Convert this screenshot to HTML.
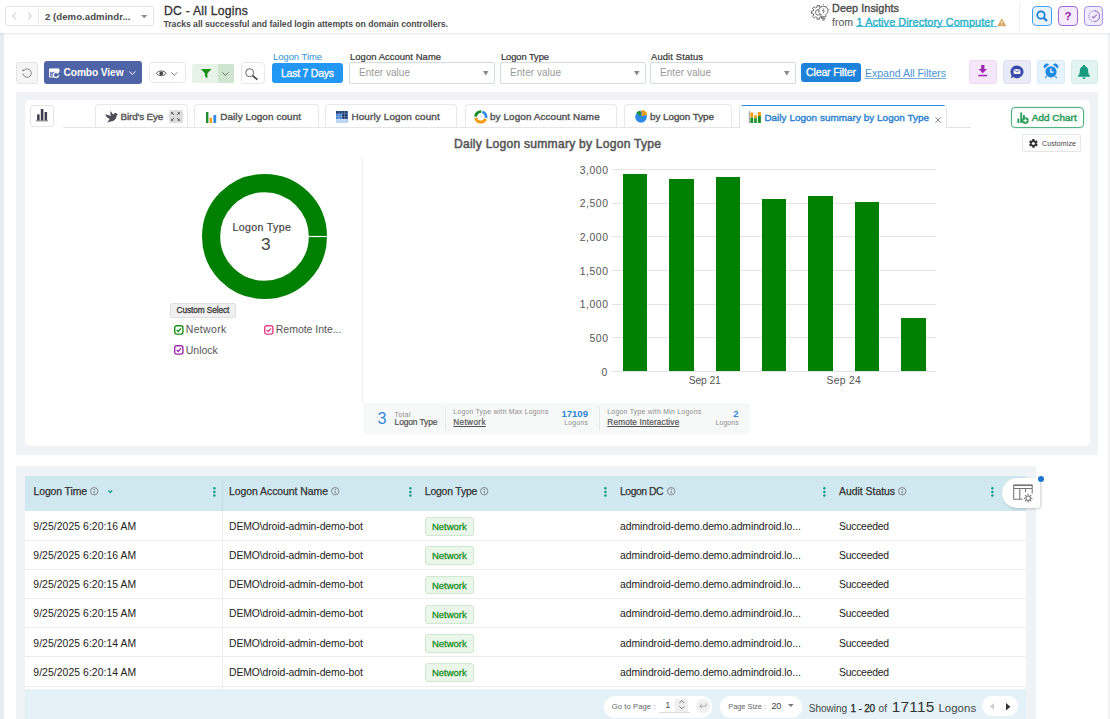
<!DOCTYPE html>
<html lang="en"><head><meta charset="utf-8"><title>DC - All Logins</title>
<style>
html,body{margin:0;padding:0;}
body{width:1110px;height:719px;position:relative;overflow:hidden;background:#fff;font-family:"Liberation Sans",sans-serif;color:#333;}
.t{position:absolute;white-space:nowrap;}
.b{position:absolute;box-sizing:border-box;}
svg{position:absolute;overflow:visible;}
</style></head><body>
<div class="b" style="left:0px;top:33px;width:4px;height:686px;background:#e6edf1;"></div>
<div class="b" style="left:1108px;top:33px;width:2px;height:686px;background:#f1f3f5;"></div>
<div class="b" style="left:0px;top:0px;width:1110px;height:33px;background:#fff;box-shadow:0 1px 2.5px rgba(0,0,0,.10);"></div>
<div class="b" style="left:5.3px;top:6px;width:149px;height:20px;border:1px solid #e6e6e6;border-radius:3px;background:#fff;"></div>
<div class="b" style="left:37.5px;top:6px;width:1px;height:20px;background:#e9e9e9;"></div>
<svg style="left:12px;top:12px;" width="5" height="8" viewBox="0 0 5 8"><path d="M4 0.5 L0.8 4 L4 7.5" fill="none" stroke="#bdbdbd" stroke-width="1"/></svg>
<svg style="left:26.5px;top:12px;" width="5" height="8" viewBox="0 0 5 8"><path d="M1 0.5 L4.2 4 L1 7.5" fill="none" stroke="#bdbdbd" stroke-width="1"/></svg>
<span class="t" style="left:45px;top:10.00px;font-size:9.6px;line-height:13px;color:#4a4a4a;font-weight:700;letter-spacing:0.043px;">2 (demo.admindr...</span>
<svg style="left:140.6px;top:14.7px;" width="6.4" height="3.2" viewBox="0 0 6.4 3.2"><path d="M0 0 H6.4 L3.2 3.2 Z" fill="#8a8a8a"/></svg>
<span class="t" style="left:164px;top:2.70px;font-size:12.2px;line-height:17px;color:#333;letter-spacing:0.228px;-webkit-text-stroke:0.3px #333;">DC - All Logins</span>
<span class="t" style="left:163.5px;top:17.80px;font-size:8.7px;line-height:12px;color:#4c4c4c;font-weight:700;letter-spacing:-0.047px;">Tracks all successful and failed login attempts on domain controllers.</span>
<span class="t" style="left:832px;top:1.30px;font-size:10.8px;line-height:15px;color:#4a4a4a;letter-spacing:0.081px;-webkit-text-stroke:0.35px #4a4a4a;">Deep Insights</span>
<span class="t" style="left:832px;top:14.80px;font-size:10.5px;line-height:15px;color:#555;">from</span>
<span class="t" style="left:856.5px;top:14.80px;font-size:10.8px;line-height:15px;color:#25b0c6;letter-spacing:0.118px;-webkit-text-stroke:0.35px #25b0c6;">1 Active Directory Computer</span>
<div class="b" style="left:856px;top:26.2px;width:140.5px;height:1.3px;background:#4cc3d6;"></div>
<div class="b" style="left:1019.3px;top:3px;width:1px;height:28px;background:#efefef;"></div>
<div class="b" style="left:1032px;top:6px;width:19.8px;height:19.6px;border:1px solid #42a0f0;border-radius:4px;background:#e8f3fc;"></div>
<div class="b" style="left:1058px;top:6px;width:19.6px;height:19.6px;border:1px solid #a066dc;border-radius:4px;background:#f5ebfc;"></div>
<div class="b" style="left:1084px;top:6px;width:19.4px;height:19.6px;border:1px solid #a892e4;border-radius:4px;background:#f1ecfb;"></div>
<div class="b" style="left:16px;top:62px;width:22px;height:22px;border:1px solid #e4e4e4;border-radius:3px;background:#f5f5f5;"></div>
<div class="b" style="left:44px;top:61px;width:98px;height:23px;border-radius:3px;background:#4e64a6;"></div>
<span class="t" style="left:63.5px;top:65.50px;font-size:10.2px;line-height:14px;color:#fff;font-weight:700;letter-spacing:-0.095px;">Combo View</span>
<div class="b" style="left:149px;top:62.3px;width:37.4px;height:21.2px;border:1px solid #e8e8e8;border-radius:4px;background:#fff;"></div>
<div class="b" style="left:192.3px;top:63.6px;width:41.7px;height:19px;border-radius:2px;background:#e6f3e6;"></div>
<div class="b" style="left:218.3px;top:63.6px;width:15.7px;height:19px;background:#cfe5cf;border-radius:0 2px 2px 0;"></div>
<div class="b" style="left:241.2px;top:62.2px;width:23.8px;height:21.4px;border:1px solid #e8e8e8;border-radius:4px;background:#fff;"></div>
<span class="t" style="left:273px;top:49.60px;font-size:9.4px;line-height:13px;color:#2b8fd8;">Logon Time</span>
<div class="b" style="left:272.3px;top:62.8px;width:70.7px;height:20px;border-radius:3px;background:#2196f3;"></div>
<span class="t" style="left:281px;top:65.50px;font-size:10.5px;line-height:15px;color:#fff;letter-spacing:-0.245px;-webkit-text-stroke:0.3px #fff;">Last 7 Days</span>
<span class="t" style="left:350px;top:49.60px;font-size:9.4px;line-height:13px;color:#333;letter-spacing:0.079px;-webkit-text-stroke:0.2px #333;">Logon Account Name</span>
<div class="b" style="left:349px;top:62px;width:146px;height:21.6px;border:1px solid #d5dbe0;border-radius:2px;background:#fff;"></div>
<span class="t" style="left:359px;top:65.50px;font-size:10px;line-height:14px;color:#9a9a9a;letter-spacing:0.041px;">Enter value</span>
<svg style="left:483.2px;top:70.6px;" width="5.6" height="4.4" viewBox="0 0 5.6 4.4"><path d="M0 0 H5.6 L2.8 4.4 Z" fill="#888"/></svg>
<span class="t" style="left:501px;top:49.60px;font-size:9.4px;line-height:13px;color:#333;letter-spacing:-0.094px;-webkit-text-stroke:0.2px #333;">Logon Type</span>
<div class="b" style="left:500px;top:62px;width:146px;height:21.6px;border:1px solid #d5dbe0;border-radius:2px;background:#fff;"></div>
<span class="t" style="left:510px;top:65.50px;font-size:10px;line-height:14px;color:#9a9a9a;letter-spacing:0.041px;">Enter value</span>
<svg style="left:634.2px;top:70.6px;" width="5.6" height="4.4" viewBox="0 0 5.6 4.4"><path d="M0 0 H5.6 L2.8 4.4 Z" fill="#888"/></svg>
<span class="t" style="left:651px;top:49.60px;font-size:9.4px;line-height:13px;color:#333;letter-spacing:0.131px;-webkit-text-stroke:0.2px #333;">Audit Status</span>
<div class="b" style="left:650px;top:62px;width:146px;height:21.6px;border:1px solid #d5dbe0;border-radius:2px;background:#fff;"></div>
<span class="t" style="left:660px;top:65.50px;font-size:10px;line-height:14px;color:#9a9a9a;letter-spacing:0.041px;">Enter value</span>
<svg style="left:784.2px;top:70.6px;" width="5.6" height="4.4" viewBox="0 0 5.6 4.4"><path d="M0 0 H5.6 L2.8 4.4 Z" fill="#888"/></svg>
<div class="b" style="left:801px;top:62.6px;width:60px;height:19.3px;border-radius:3px;background:#1f82da;"></div>
<span class="t" style="left:806px;top:65.00px;font-size:10.5px;line-height:15px;color:#fff;letter-spacing:-0.122px;-webkit-text-stroke:0.3px #fff;">Clear Filter</span>
<span class="t" style="left:865px;top:65.50px;font-size:10.5px;line-height:15px;color:#4a92d4;letter-spacing:-0.007px;">Expand All Filters</span>
<div class="b" style="left:865px;top:78.2px;width:81px;height:1.2px;background:#7aaee0;"></div>
<div class="b" style="left:969px;top:60px;width:28px;height:24px;border:1px dotted #e6cfee;border-radius:3px;background:#f6e6f9;"></div>
<div class="b" style="left:1003px;top:60px;width:28px;height:24px;border:1px solid #dfe1f2;border-radius:3px;background:#e8eaf6;"></div>
<div class="b" style="left:1037px;top:60px;width:27.5px;height:24px;border:1px solid #dcebf8;border-radius:3px;background:#e6f2fc;"></div>
<div class="b" style="left:1071px;top:60px;width:27px;height:24px;border:1px solid #d4ece6;border-radius:3px;background:#e2f4ef;"></div>
<svg style="left:22px;top:68.2px;" width="10" height="10" viewBox="0 0 10 10"><path d="M2.2 2.0 A4.2 4.2 0 1 1 0.9 5.6" fill="none" stroke="#777" stroke-width="0.9"/><path d="M0.6 0.9 L2.6 2.4 L0.5 3.6 Z" fill="#777"/></svg>
<svg style="left:49.2px;top:67.6px;" width="10.6" height="9.6" viewBox="0 0 10.6 9.6"><path d="M0.5 1.2 H10 V4.4 M0.5 1.2 V9 H4.6 M0.5 3.4 H10" fill="none" stroke="#fff" stroke-width="1"/><rect x="0.5" y="0.6" width="9.5" height="2.4" fill="#fff"/><path d="M1.6 5 H3.6 M1.6 7 H3.6" stroke="#fff" stroke-width="0.8"/><path d="M9.6 6.9 A2.6 2.6 0 1 1 8.6 4.9" fill="none" stroke="#fff" stroke-width="1.3"/><path d="M7.8 3.6 L10.2 4.6 L8.4 6.2 Z" fill="#fff"/></svg>
<svg style="left:129.2px;top:71px;" width="6.8" height="4.2" viewBox="0 0 6.8 4.2"><path d="M0.4 0.4 L3.4 3.6 L6.4 0.4" fill="none" stroke="#fff" stroke-width="1"/></svg>
<svg style="left:156.4px;top:70px;" width="10.6" height="6.6" viewBox="0 0 10.6 6.6"><path d="M0.4 3.3 C2.4 0.2 8.2 0.2 10.2 3.3 C8.2 6.4 2.4 6.4 0.4 3.3 Z" fill="none" stroke="#444" stroke-width="0.9"/><circle cx="5.3" cy="3.3" r="1.9" fill="#444"/></svg>
<svg style="left:171.3px;top:71.9px;" width="6.6" height="3.8" viewBox="0 0 6.6 3.8"><path d="M0.4 0.4 L3.3 3.3 L6.2 0.4" fill="none" stroke="#777" stroke-width="0.95"/></svg>
<svg style="left:201px;top:68.6px;" width="10.4" height="9.2" viewBox="0 0 10.4 9.2"><path d="M0 0 H10.4 L6.4 4.6 V9.2 L4 7.6 V4.6 Z" fill="#1a8f1a"/></svg>
<svg style="left:222.2px;top:71.9px;" width="6.8" height="3.9" viewBox="0 0 6.8 3.9"><path d="M0.4 0.4 L3.4 3.4 L6.4 0.4" fill="none" stroke="#666" stroke-width="0.95"/></svg>
<svg style="left:245px;top:67.6px;" width="13" height="13" viewBox="0 0 13 13"><circle cx="4.7" cy="4.7" r="4" fill="none" stroke="#555" stroke-width="0.9"/><path d="M7.6 7.6 L12.4 11.6" stroke="#444" stroke-width="1.7"/></svg>
<svg style="left:811.2px;top:4.4px;" width="19" height="17" viewBox="0 0 19 17"><g fill="none" stroke="#5a5a5a" stroke-width="0.9" stroke-linejoin="round"><path d="M12.23 7.07 L14.01 7.27 L14.01 9.53 L12.23 9.73 L11.70 11.01 L12.81 12.41 L11.21 14.01 L9.81 12.90 L8.53 13.43 L8.33 15.21 L6.07 15.21 L5.87 13.43 L4.59 12.90 L3.19 14.01 L1.59 12.41 L2.70 11.01 L2.17 9.73 L0.39 9.53 L0.39 7.27 L2.17 7.07 L2.70 5.79 L1.59 4.39 L3.19 2.79 L4.59 3.90 L5.87 3.37 L6.07 1.59 L8.33 1.59 L8.53 3.37 L9.81 3.90 L11.21 2.79 L12.81 4.39 L11.70 5.79 Z"/><circle cx="7.2" cy="8.4" r="2.7"/><path d="M12.4 2.2 A4.5 4.5 0 0 1 14.8 10.6 V12.8 H10 V10.6 A4.5 4.5 0 0 1 12.4 2.2 Z" fill="#fff"/><path d="M10.4 14.4 H14.4 M11 16 H13.8"/><path d="M12.9 4.4 L11.4 6.9 H13.4 L11.9 9.4" stroke-width="0.8"/><path d="M12.4 0 V1 M16.6 1.6 L15.9 2.4 M18.4 5.6 H17.5 M8.4 1.4 L9 2.2" stroke-width="0.8"/></g></svg>
<svg style="left:997px;top:18.4px;" width="9.6" height="8.4" viewBox="0 0 9.6 8.4"><path d="M4.8 0.3 L9.4 8.2 H0.2 Z" fill="#d9a860"/><path d="M4.8 3 V5.6" stroke="#fff" stroke-width="1"/><circle cx="4.8" cy="6.9" r="0.55" fill="#fff"/></svg>
<svg style="left:1035.6px;top:10.2px;" width="12" height="12" viewBox="0 0 12 12"><circle cx="5" cy="5" r="3.7" fill="none" stroke="#1976d2" stroke-width="1.7"/><path d="M7.8 7.8 L11 11" stroke="#1976d2" stroke-width="2"/></svg>
<span class="t" style="left:1064.4px;top:8.20px;font-size:11.5px;line-height:16px;color:#8e24aa;font-weight:700;">?</span>
<svg style="left:1087.6px;top:9.6px;" width="12.4" height="12.4" viewBox="0 0 12.4 12.4"><circle cx="6.2" cy="6.2" r="5.4" fill="none" stroke="#9575cd" stroke-width="0.9" stroke-dasharray="1.4 0.7"/><path d="M6.2 0.8 A5.4 5.4 0 0 1 6.2 11.6" fill="none" stroke="#9575cd" stroke-width="0.9"/><path d="M3.8 6.3 L5.6 8 L8.8 4.6" fill="none" stroke="#9575cd" stroke-width="1.1"/></svg>
<svg style="left:978.4px;top:65.4px;" width="9.6" height="11.4" viewBox="0 0 9.6 11.4"><path d="M3.2 0 H6.4 V4 H9 L4.8 8.2 L0.6 4 H3.2 Z" fill="#9c27b0"/><rect x="0.4" y="9.8" width="8.8" height="1.5" fill="#9c27b0"/></svg>
<svg style="left:1010.2px;top:64.8px;" width="14" height="14" viewBox="0 0 14 14"><path d="M7 0.4 A6.4 6.4 0 1 1 3.2 11.9 L0.8 13.4 L1.6 10.4 A6.4 6.4 0 0 1 7 0.4 Z" fill="#3949ab"/><rect x="3.6" y="4.3" width="6.8" height="4.8" rx="0.6" fill="#fff"/><path d="M3.9 4.7 L7 7 L10.1 4.7" fill="none" stroke="#3949ab" stroke-width="0.8"/></svg>
<svg style="left:1043.6px;top:64.4px;" width="14" height="14.4" viewBox="0 0 14 14.4"><circle cx="7" cy="7.8" r="5.6" fill="#1e88e5"/><path d="M0.3 4.2 A2.9 2.9 0 0 1 4.8 0.6 Z M13.7 4.2 A2.9 2.9 0 0 0 9.2 0.6 Z" fill="#1e88e5" stroke="#1e88e5" stroke-width="0.5"/><path d="M2.6 12.2 L1.4 13.8 M11.4 12.2 L12.6 13.8" stroke="#1e88e5" stroke-width="1.3"/><path d="M6.8 4.6 V8.2 H9.6" fill="none" stroke="#fff" stroke-width="1.2"/></svg>
<svg style="left:1078.2px;top:65.2px;" width="12" height="14" viewBox="0 0 12 14"><path d="M6 0 C6.8 0 7.2 0.5 7.2 1.2 C9.4 1.8 10.2 3.8 10.2 6 C10.2 8.6 10.8 9.8 12 11 V11.8 H0 V11 C1.2 9.8 1.8 8.6 1.8 6 C1.8 3.8 2.6 1.8 4.8 1.2 C4.8 0.5 5.2 0 6 0 Z" fill="#159a80"/><path d="M4.4 12.5 H7.6 A1.6 1.6 0 0 1 4.4 12.5 Z" fill="#159a80"/></svg>
<div class="b" style="left:16px;top:91.6px;width:1082px;height:363.2px;background:#eff3f6;"></div>
<div class="b" style="left:25px;top:100px;width:1065px;height:345.5px;background:#fff;border-radius:5px;"></div>
<div class="b" style="left:30px;top:105px;width:24px;height:22px;border:1px solid #e6e6e6;border-radius:3px;background:#fff;"></div>
<svg style="left:36.2px;top:109.4px;" width="12" height="12.4" viewBox="0 0 12 12.4"><rect x="1.1" y="5.4" width="2.5" height="6" fill="#3f3d4d"/><rect x="4.8" y="0" width="2.6" height="11.4" fill="#3f3d4d"/><rect x="8.6" y="3" width="2.5" height="8.4" fill="#3f3d4d"/><rect x="0" y="11.5" width="12" height="0.8" fill="#555"/></svg>
<div class="b" style="left:94.5px;top:103.7px;width:93.5px;height:24px;border:1px solid #e8e8e8;border-bottom:none;border-radius:4px 4px 0 0;background:#fff;"></div>
<div class="b" style="left:193.7px;top:103.7px;width:124.90000000000003px;height:24px;border:1px solid #e8e8e8;border-bottom:none;border-radius:4px 4px 0 0;background:#fff;"></div>
<div class="b" style="left:325.4px;top:103.7px;width:131.90000000000003px;height:24px;border:1px solid #e8e8e8;border-bottom:none;border-radius:4px 4px 0 0;background:#fff;"></div>
<div class="b" style="left:464.7px;top:103.7px;width:152.3px;height:24px;border:1px solid #e8e8e8;border-bottom:none;border-radius:4px 4px 0 0;background:#fff;"></div>
<div class="b" style="left:624px;top:103.7px;width:107.60000000000002px;height:24px;border:1px solid #e8e8e8;border-bottom:none;border-radius:4px 4px 0 0;background:#fff;"></div>
<div class="b" style="left:63px;top:127.2px;width:908px;height:1px;background:#e5e5e5;"></div>
<span class="t" style="left:120.6px;top:109.50px;font-size:9.9px;line-height:14px;color:#555;letter-spacing:-0.173px;-webkit-text-stroke:0.4px #555;">Bird&#x27;s Eye</span>
<span class="t" style="left:220.2px;top:109.50px;font-size:9.9px;line-height:14px;color:#555;letter-spacing:0.109px;-webkit-text-stroke:0.4px #555;">Daily Logon count</span>
<span class="t" style="left:351.4px;top:109.50px;font-size:9.9px;line-height:14px;color:#555;letter-spacing:0.156px;-webkit-text-stroke:0.4px #555;">Hourly Logon count</span>
<span class="t" style="left:490px;top:109.50px;font-size:9.9px;line-height:14px;color:#555;letter-spacing:0.105px;-webkit-text-stroke:0.4px #555;">by Logon Account Name</span>
<span class="t" style="left:650px;top:109.50px;font-size:9.9px;line-height:14px;color:#555;letter-spacing:-0.051px;-webkit-text-stroke:0.4px #555;">by Logon Type</span>
<div class="b" style="left:738.7px;top:104.6px;width:208.3px;height:23.8px;border:1px solid #e4e4e4;border-top:none;border-bottom:none;border-radius:4px 4px 0 0;background:#fff;overflow:hidden;"><div style="height:1.5px;background:#3289e4;"></div></div>
<span class="t" style="left:764.4px;top:110.70px;font-size:9.9px;line-height:14px;color:#2b7fd0;letter-spacing:0.054px;-webkit-text-stroke:0.4px #2b7fd0;">Daily Logon summary by Logon Type</span>
<svg style="left:934.7px;top:116.5px;" width="6" height="6" viewBox="0 0 6 6"><path d="M0.5 0.5 L5.5 5.5 M5.5 0.5 L0.5 5.5" stroke="#777" stroke-width="0.9" fill="none"/></svg>
<svg style="left:104.7px;top:110.9px;" width="13" height="11.8" viewBox="0 0 13 11.8"><path d="M13 3.4 L11.6 2.4 C10.8 1.6 9.4 1.8 8.8 2.8 L8.2 3.8 L5.6 0 C5.2 2 5.4 3.6 6 5 L0.2 3.2 C1 5.6 2.6 7.2 4.8 7.8 L2.2 11.6 L5.6 10.6 C9 10.4 11.4 8.4 11.6 4.6 Z" fill="#4f4b57"/></svg>
<div class="b" style="left:168.5px;top:109.7px;width:14px;height:13px;background:#dcdcdc;border-radius:2px;"></div>
<svg style="left:171px;top:112px;" width="9" height="9" viewBox="0 0 9 9"><path d="M0.5 0.5 L3 3 M8.5 0.5 L6 3 M0.5 8.5 L3 6 M8.5 8.5 L6 6" stroke="#555" stroke-width="1" fill="none"/><path d="M0.3 0.3 h2.2 l-2.2 2.2z M8.7 0.3 h-2.2 l2.2 2.2z M0.3 8.7 h2.2 l-2.2 -2.2z M8.7 8.7 h-2.2 l2.2 -2.2z" fill="#555"/></svg>
<svg style="left:205.6px;top:112px;" width="11" height="11" viewBox="0 0 11 11"><rect x="0" y="0" width="2.4" height="11" fill="#1a8f2a"/><rect x="3.6" y="5.6" width="2.4" height="5.4" fill="#f39c12"/><rect x="7.4" y="3" width="2.8" height="8" fill="#2e8ae6"/></svg>
<svg style="left:336px;top:111px;" width="11.6" height="11.4" viewBox="0 0 11.6 11.4"><rect width="11.6" height="11.4" fill="#4a90d9"/><rect x="0" y="0" width="11.6" height="3" fill="#1d3f7a"/><rect x="5.8" y="3" width="5.8" height="5" fill="#0f2c63"/><rect x="0" y="3" width="5.8" height="5" fill="#3f7fd0"/><rect x="0" y="8" width="11.6" height="3.4" fill="#b9d4ef"/><path d="M2.9 0 V11.4 M5.8 0 V11.4 M8.7 0 V11.4 M0 3 H11.6 M0 5.6 H11.6 M0 8 H11.6" stroke="#dbe8f6" stroke-width="0.35"/></svg>
<svg style="left:474.2px;top:109.8px;" width="13.6" height="13.6" viewBox="0 0 13.6 13.6"><g fill="none" stroke-width="2.9" transform="translate(6.8 6.8)"><path d="M1.61 -4.95 A5.2 5.2 0 0 1 5.09 1.08" stroke="#2e8ae6"/><path d="M4.75 2.12 A5.2 5.2 0 0 1 -5.12 0.90" stroke="#f39c12"/><path d="M-5.20 -0.18 A5.2 5.2 0 0 1 0.54 -5.17" stroke="#1a8f2a"/></g></svg>
<svg style="left:634.5px;top:110px;" width="12.4" height="12.8" viewBox="0 0 12.4 12.8"><circle cx="6" cy="7" r="5.8" fill="#2e8ae6"/><path d="M6.6 6.2 V0 A6.2 6.2 0 0 1 12.4 4.4 Z" fill="#f39c12"/><path d="M5.6 6.6 L1.2 2.6 A6 6 0 0 1 5.6 0.8 Z" fill="#1a8f2a"/></svg>
<svg style="left:748.5px;top:111.4px;" width="12" height="12" viewBox="0 0 12 12"><path d="M0.3 0 V12" stroke="#555" stroke-width="0.6"/><rect x="1.4" y="1.5" width="2.8" height="5" fill="#f39c12"/><rect x="1.4" y="6.5" width="2.8" height="5.5" fill="#1a8f2a"/><rect x="5.2" y="4.2" width="2.6" height="3" fill="#f39c12"/><rect x="5.2" y="7.2" width="2.6" height="4.8" fill="#1a8f2a"/><rect x="8.9" y="1" width="3" height="4" fill="#f39c12"/><rect x="8.9" y="5" width="3" height="7" fill="#1a8f2a"/></svg>
<div class="b" style="left:1011px;top:107px;width:72.5px;height:20.5px;border:1.4px solid #4fb482;border-radius:4px;background:#fff;box-shadow:0 0 0 0.5px #cfeadb;"></div>
<svg style="left:1017px;top:111.5px;" width="12" height="12" viewBox="0 0 12 12"><path d="M1.4 6.6 V11 M4.2 0.6 V11 M6.9 3 V6" stroke="#2e9e5b" stroke-width="1.9" fill="none"/><circle cx="8.3" cy="8.6" r="3.4" fill="#2e9e5b"/><path d="M8.3 6.7 V10.5 M6.4 8.6 H10.2" stroke="#fff" stroke-width="1"/></svg>
<span class="t" style="left:1031.8px;top:110.70px;font-size:9.9px;line-height:14px;color:#2e9e5b;letter-spacing:0.054px;-webkit-text-stroke:0.5px #2e9e5b;">Add Chart</span>
<div class="b" style="left:1022.4px;top:134px;width:58.4px;height:17.6px;border:1px solid #e6e6e6;border-radius:2px;background:#fff;"></div>
<svg style="left:1028.8px;top:139.4px;" width="8.8" height="8.8" viewBox="0 0 8.8 8.8"><g transform="translate(4.4 4.4)"><path d="M0.00 4.40 L-0.00 -4.40 M3.81 2.20 L-3.81 -2.20 M-3.81 2.20 L3.81 -2.20" stroke="#333" stroke-width="2.3"/><circle r="3.1" fill="#333"/><circle r="1.5" fill="#fff"/></g></svg>
<span class="t" style="left:1042px;top:138.90px;font-size:7px;line-height:10px;color:#444;letter-spacing:0.115px;">Customize</span>
<span class="t" style="left:454px;top:135.50px;font-size:12.1px;line-height:17px;color:#555;letter-spacing:0.236px;-webkit-text-stroke:0.5px #555;">Daily Logon summary by Logon Type</span>
<div class="b" style="left:362px;top:158px;width:1px;height:245px;background:#efefef;"></div>
<svg style="left:201.7px;top:174.2px;" width="125" height="125" viewBox="0 0 125 125"><circle cx="62.5" cy="62.5" r="53.4" fill="none" stroke="#008000" stroke-width="18.2"/><rect x="105" y="61.9" width="21" height="1.2" fill="#fff"/></svg>
<span class="t" style="left:232.6px;top:220.10px;font-size:10.6px;line-height:15px;color:#444;letter-spacing:0.335px;-webkit-text-stroke:0.2px #444;">Logon Type</span>
<span class="t" style="left:261px;top:231.60px;font-size:17.3px;line-height:24px;color:#444;">3</span>
<div class="b" style="left:169.8px;top:303.3px;width:66px;height:14.6px;border:1px solid #dedede;border-radius:2px;background:#f0f0f0;"></div>
<span class="t" style="left:176.6px;top:304.40px;font-size:8.3px;line-height:12px;color:#3c3c3c;letter-spacing:-0.096px;-webkit-text-stroke:0.3px #3c3c3c;">Custom Select</span>
<svg style="left:174px;top:324.6px;" width="9.6" height="9.8" viewBox="0 0 9.6 9.8"><rect x="0.7" y="0.7" width="8.2" height="8.4" rx="2" fill="#fff" stroke="#1a8f1a" stroke-width="1.4"/><path d="M2.6 4.9 L4.2 6.5 L7 3.4" fill="none" stroke="#1a8f1a" stroke-width="1.3"/></svg>
<span class="t" style="left:185.8px;top:322.40px;font-size:10.5px;line-height:15px;color:#555;letter-spacing:0.314px;">Network</span>
<svg style="left:264px;top:324.6px;" width="9.6" height="9.8" viewBox="0 0 9.6 9.8"><rect x="0.7" y="0.7" width="8.2" height="8.4" rx="2" fill="#fff" stroke="#e83e8c" stroke-width="1.4"/><path d="M2.6 4.9 L4.2 6.5 L7 3.4" fill="none" stroke="#e83e8c" stroke-width="1.3"/></svg>
<span class="t" style="left:275.8px;top:322.40px;font-size:10.5px;line-height:15px;color:#555;letter-spacing:-0.027px;">Remote Inte...</span>
<svg style="left:174px;top:344.9px;" width="9.6" height="9.8" viewBox="0 0 9.6 9.8"><rect x="0.7" y="0.7" width="8.2" height="8.4" rx="2" fill="#fff" stroke="#9c27b0" stroke-width="1.4"/><path d="M2.6 4.9 L4.2 6.5 L7 3.4" fill="none" stroke="#9c27b0" stroke-width="1.3"/></svg>
<span class="t" style="left:185.8px;top:342.70px;font-size:10.5px;line-height:15px;color:#555;letter-spacing:-0.022px;">Unlock</span>
<div class="b" style="left:612px;top:169.1px;width:324px;height:1px;background:#e4e4e4;"></div>
<span class="t" style="left:579.7px;top:163.00px;font-size:10.4px;line-height:15px;color:#555;letter-spacing:0.571px;">3,000</span>
<div class="b" style="left:612px;top:202.5px;width:324px;height:1px;background:#e4e4e4;"></div>
<span class="t" style="left:579.7px;top:196.40px;font-size:10.4px;line-height:15px;color:#555;letter-spacing:0.571px;">2,500</span>
<div class="b" style="left:612px;top:236.2px;width:324px;height:1px;background:#e4e4e4;"></div>
<span class="t" style="left:579.7px;top:230.10px;font-size:10.4px;line-height:15px;color:#555;letter-spacing:0.571px;">2,000</span>
<div class="b" style="left:612px;top:269.9px;width:324px;height:1px;background:#e4e4e4;"></div>
<span class="t" style="left:579.7px;top:263.80px;font-size:10.4px;line-height:15px;color:#555;letter-spacing:0.571px;">1,500</span>
<div class="b" style="left:612px;top:303.5px;width:324px;height:1px;background:#e4e4e4;"></div>
<span class="t" style="left:579.7px;top:297.40px;font-size:10.4px;line-height:15px;color:#555;letter-spacing:0.571px;">1,000</span>
<div class="b" style="left:612px;top:337.2px;width:324px;height:1px;background:#e4e4e4;"></div>
<span class="t" style="left:589.5px;top:331.10px;font-size:10.4px;line-height:15px;color:#555;letter-spacing:0.578px;">500</span>
<div class="b" style="left:612px;top:371.0px;width:324px;height:1px;background:#e4e4e4;"></div>
<span class="t" style="left:601.5px;top:364.90px;font-size:10.4px;line-height:15px;color:#555;">0</span>
<div class="b" style="left:622.9px;top:173.5px;width:24.4px;height:197.89999999999998px;background:#008000;"></div>
<div class="b" style="left:669.4px;top:179.2px;width:24.4px;height:192.2px;background:#008000;"></div>
<div class="b" style="left:715.7px;top:177.3px;width:24.4px;height:194.09999999999997px;background:#008000;"></div>
<div class="b" style="left:762px;top:199.2px;width:24.4px;height:172.2px;background:#008000;"></div>
<div class="b" style="left:808.3px;top:196.2px;width:24.4px;height:175.2px;background:#008000;"></div>
<div class="b" style="left:854.8px;top:201.9px;width:24.4px;height:169.49999999999997px;background:#008000;"></div>
<div class="b" style="left:901.2px;top:318px;width:24.4px;height:53.39999999999998px;background:#008000;"></div>
<span class="t" style="left:688.7px;top:373.00px;font-size:10.4px;line-height:15px;color:#555;letter-spacing:-0.148px;">Sep 21</span>
<span class="t" style="left:826.4px;top:373.00px;font-size:10.4px;line-height:15px;color:#555;letter-spacing:0.312px;">Sep 24</span>
<div class="b" style="left:363.2px;top:403.2px;width:387px;height:31px;background:#f7f8f8;border-radius:4px;"></div>
<span class="t" style="left:377.5px;top:407.30px;font-size:16.2px;line-height:23px;color:#3388d8;">3</span>
<span class="t" style="left:394.6px;top:409.60px;font-size:6.8px;line-height:10px;color:#8c8c8c;letter-spacing:0.385px;">Total</span>
<span class="t" style="left:394.6px;top:415.90px;font-size:8.4px;line-height:12px;color:#4f4f4f;letter-spacing:-0.092px;-webkit-text-stroke:0.2px #4f4f4f;">Logon Type</span>
<div class="b" style="left:444.5px;top:407px;width:1px;height:24px;background:#e9e9e9;"></div>
<span class="t" style="left:453.3px;top:406.60px;font-size:6.8px;line-height:10px;color:#8c8c8c;letter-spacing:0.268px;">Logon Type with Max Logons</span>
<span class="t" style="left:453.3px;top:417.00px;font-size:8.2px;line-height:11px;color:#555;letter-spacing:0.361px;-webkit-text-stroke:0.2px #555;text-decoration:underline;">Network</span>
<span class="t" style="left:561.5px;top:407.20px;font-size:9.6px;line-height:13px;color:#2e86d6;font-weight:700;letter-spacing:-0.047px;">17109</span>
<span class="t" style="left:564.2px;top:417.90px;font-size:6.8px;line-height:10px;color:#8c8c8c;letter-spacing:0.297px;">Logons</span>
<div class="b" style="left:599px;top:407px;width:1px;height:24px;background:#e9e9e9;"></div>
<span class="t" style="left:607.3px;top:406.60px;font-size:6.8px;line-height:10px;color:#8c8c8c;letter-spacing:0.296px;">Logon Type with Min Logons</span>
<span class="t" style="left:607.3px;top:417.00px;font-size:8.2px;line-height:11px;color:#555;letter-spacing:0.187px;-webkit-text-stroke:0.2px #555;text-decoration:underline;">Remote Interactive</span>
<span class="t" style="left:733.3px;top:407.20px;font-size:9.6px;line-height:13px;color:#2e86d6;font-weight:700;">2</span>
<span class="t" style="left:715.5px;top:417.90px;font-size:6.8px;line-height:10px;color:#8c8c8c;letter-spacing:0.158px;">Logons</span>
<div class="b" style="left:16px;top:466.2px;width:1019.6px;height:253px;background:#eff3f6;"></div>
<div class="b" style="left:25px;top:475.6px;width:1001px;height:35.4px;background:#d0e8f0;"></div>
<div class="b" style="left:25px;top:510.7px;width:1001px;height:178.5px;background:#fff;"></div>
<div class="b" style="left:25px;top:689px;width:1001px;height:30px;background:#e4f2f7;"></div>
<div class="b" style="left:221.5px;top:480px;width:1px;height:31px;background:#c2dce6;"></div>
<div class="b" style="left:221.5px;top:511px;width:1px;height:178px;background:#eeeeee;"></div>
<span class="t" style="left:33.5px;top:483.70px;font-size:10.4px;line-height:15px;color:#333;letter-spacing:-0.089px;-webkit-text-stroke:0.25px #333;">Logon Time</span>
<svg style="left:90.4px;top:487.0px;" width="8.4" height="8.4" viewBox="0 0 8.4 8.4"><circle cx="4.2" cy="4.2" r="3.7" fill="none" stroke="#707070" stroke-width="0.8"/><path d="M4.2 3.8 V6.3" stroke="#707070" stroke-width="0.9"/><circle cx="4.2" cy="2.4" r="0.55" fill="#707070"/></svg>
<svg style="left:213.0px;top:487.4px;" width="2.8" height="10" viewBox="0 0 2.8 10"><circle cx="1.4" cy="1.3" r="1.25" fill="#0f9d8a"/><circle cx="1.4" cy="4.9" r="1.25" fill="#0f9d8a"/><circle cx="1.4" cy="8.5" r="1.25" fill="#0f9d8a"/></svg>
<span class="t" style="left:229px;top:483.70px;font-size:10.4px;line-height:15px;color:#333;letter-spacing:-0.021px;-webkit-text-stroke:0.25px #333;">Logon Account Name</span>
<svg style="left:331px;top:487.0px;" width="8.4" height="8.4" viewBox="0 0 8.4 8.4"><circle cx="4.2" cy="4.2" r="3.7" fill="none" stroke="#707070" stroke-width="0.8"/><path d="M4.2 3.8 V6.3" stroke="#707070" stroke-width="0.9"/><circle cx="4.2" cy="2.4" r="0.55" fill="#707070"/></svg>
<svg style="left:408.8px;top:487.4px;" width="2.8" height="10" viewBox="0 0 2.8 10"><circle cx="1.4" cy="1.3" r="1.25" fill="#0f9d8a"/><circle cx="1.4" cy="4.9" r="1.25" fill="#0f9d8a"/><circle cx="1.4" cy="8.5" r="1.25" fill="#0f9d8a"/></svg>
<span class="t" style="left:424.8px;top:483.70px;font-size:10.4px;line-height:15px;color:#333;letter-spacing:-0.181px;-webkit-text-stroke:0.25px #333;">Logon Type</span>
<svg style="left:480.4px;top:487.0px;" width="8.4" height="8.4" viewBox="0 0 8.4 8.4"><circle cx="4.2" cy="4.2" r="3.7" fill="none" stroke="#707070" stroke-width="0.8"/><path d="M4.2 3.8 V6.3" stroke="#707070" stroke-width="0.9"/><circle cx="4.2" cy="2.4" r="0.55" fill="#707070"/></svg>
<svg style="left:604.1px;top:487.4px;" width="2.8" height="10" viewBox="0 0 2.8 10"><circle cx="1.4" cy="1.3" r="1.25" fill="#0f9d8a"/><circle cx="1.4" cy="4.9" r="1.25" fill="#0f9d8a"/><circle cx="1.4" cy="8.5" r="1.25" fill="#0f9d8a"/></svg>
<span class="t" style="left:620px;top:483.70px;font-size:10.4px;line-height:15px;color:#333;letter-spacing:-0.457px;-webkit-text-stroke:0.25px #333;">Logon DC</span>
<svg style="left:666.8px;top:487.0px;" width="8.4" height="8.4" viewBox="0 0 8.4 8.4"><circle cx="4.2" cy="4.2" r="3.7" fill="none" stroke="#707070" stroke-width="0.8"/><path d="M4.2 3.8 V6.3" stroke="#707070" stroke-width="0.9"/><circle cx="4.2" cy="2.4" r="0.55" fill="#707070"/></svg>
<svg style="left:823.1px;top:487.4px;" width="2.8" height="10" viewBox="0 0 2.8 10"><circle cx="1.4" cy="1.3" r="1.25" fill="#0f9d8a"/><circle cx="1.4" cy="4.9" r="1.25" fill="#0f9d8a"/><circle cx="1.4" cy="8.5" r="1.25" fill="#0f9d8a"/></svg>
<span class="t" style="left:839px;top:483.70px;font-size:10.4px;line-height:15px;color:#333;-webkit-text-stroke:0.25px #333;">Audit Status</span>
<svg style="left:898px;top:487.0px;" width="8.4" height="8.4" viewBox="0 0 8.4 8.4"><circle cx="4.2" cy="4.2" r="3.7" fill="none" stroke="#707070" stroke-width="0.8"/><path d="M4.2 3.8 V6.3" stroke="#707070" stroke-width="0.9"/><circle cx="4.2" cy="2.4" r="0.55" fill="#707070"/></svg>
<svg style="left:991.1px;top:487.4px;" width="2.8" height="10" viewBox="0 0 2.8 10"><circle cx="1.4" cy="1.3" r="1.25" fill="#0f9d8a"/><circle cx="1.4" cy="4.9" r="1.25" fill="#0f9d8a"/><circle cx="1.4" cy="8.5" r="1.25" fill="#0f9d8a"/></svg>
<svg style="left:107.5px;top:489.8px;" width="4.6" height="3.2" viewBox="0 0 4.6 3.2"><path d="M0.3 0.3 L2.3 2.5 L4.3 0.3" fill="none" stroke="#0f9d8a" stroke-width="1.2"/></svg>
<div class="b" style="left:25px;top:539.5px;width:1001px;height:1px;background:#ececec;"></div>
<span class="t" style="left:33.3px;top:518.80px;font-size:10.4px;line-height:15px;color:#222;letter-spacing:0.064px;">9/25/2025 6:20:16 AM</span>
<span class="t" style="left:229px;top:518.80px;font-size:10.4px;line-height:15px;color:#222;letter-spacing:-0.103px;">DEMO\droid-admin-demo-bot</span>
<div class="b" style="left:424.8px;top:517.2px;width:49px;height:18.8px;border:1px solid #cfe8d0;border-radius:3px;background:#eaf6ea;"></div>
<span class="t" style="left:431.9px;top:520.20px;font-size:9.5px;line-height:13px;color:#1f8f28;letter-spacing:-0.007px;-webkit-text-stroke:0.3px #1f8f28;">Network</span>
<span class="t" style="left:620px;top:518.80px;font-size:10.4px;line-height:15px;color:#222;letter-spacing:-0.080px;">admindroid-demo.demo.admindroid.lo...</span>
<span class="t" style="left:839px;top:518.80px;font-size:10.4px;line-height:15px;color:#222;letter-spacing:-0.250px;">Succeeded</span>
<div class="b" style="left:25px;top:568.7px;width:1001px;height:1px;background:#ececec;"></div>
<span class="t" style="left:33.3px;top:548.00px;font-size:10.4px;line-height:15px;color:#222;letter-spacing:0.064px;">9/25/2025 6:20:16 AM</span>
<span class="t" style="left:229px;top:548.00px;font-size:10.4px;line-height:15px;color:#222;letter-spacing:-0.103px;">DEMO\droid-admin-demo-bot</span>
<div class="b" style="left:424.8px;top:546.4px;width:49px;height:18.8px;border:1px solid #cfe8d0;border-radius:3px;background:#eaf6ea;"></div>
<span class="t" style="left:431.9px;top:549.40px;font-size:9.5px;line-height:13px;color:#1f8f28;letter-spacing:-0.007px;-webkit-text-stroke:0.3px #1f8f28;">Network</span>
<span class="t" style="left:620px;top:548.00px;font-size:10.4px;line-height:15px;color:#222;letter-spacing:-0.080px;">admindroid-demo.demo.admindroid.lo...</span>
<span class="t" style="left:839px;top:548.00px;font-size:10.4px;line-height:15px;color:#222;letter-spacing:-0.250px;">Succeeded</span>
<div class="b" style="left:25px;top:597.9000000000001px;width:1001px;height:1px;background:#ececec;"></div>
<span class="t" style="left:33.3px;top:577.20px;font-size:10.4px;line-height:15px;color:#222;letter-spacing:0.064px;">9/25/2025 6:20:15 AM</span>
<span class="t" style="left:229px;top:577.20px;font-size:10.4px;line-height:15px;color:#222;letter-spacing:-0.103px;">DEMO\droid-admin-demo-bot</span>
<div class="b" style="left:424.8px;top:575.6px;width:49px;height:18.8px;border:1px solid #cfe8d0;border-radius:3px;background:#eaf6ea;"></div>
<span class="t" style="left:431.9px;top:578.60px;font-size:9.5px;line-height:13px;color:#1f8f28;letter-spacing:-0.007px;-webkit-text-stroke:0.3px #1f8f28;">Network</span>
<span class="t" style="left:620px;top:577.20px;font-size:10.4px;line-height:15px;color:#222;letter-spacing:-0.080px;">admindroid-demo.demo.admindroid.lo...</span>
<span class="t" style="left:839px;top:577.20px;font-size:10.4px;line-height:15px;color:#222;letter-spacing:-0.250px;">Succeeded</span>
<div class="b" style="left:25px;top:627.1px;width:1001px;height:1px;background:#ececec;"></div>
<span class="t" style="left:33.3px;top:606.40px;font-size:10.4px;line-height:15px;color:#222;letter-spacing:0.064px;">9/25/2025 6:20:15 AM</span>
<span class="t" style="left:229px;top:606.40px;font-size:10.4px;line-height:15px;color:#222;letter-spacing:-0.103px;">DEMO\droid-admin-demo-bot</span>
<div class="b" style="left:424.8px;top:604.8px;width:49px;height:18.8px;border:1px solid #cfe8d0;border-radius:3px;background:#eaf6ea;"></div>
<span class="t" style="left:431.9px;top:607.80px;font-size:9.5px;line-height:13px;color:#1f8f28;letter-spacing:-0.007px;-webkit-text-stroke:0.3px #1f8f28;">Network</span>
<span class="t" style="left:620px;top:606.40px;font-size:10.4px;line-height:15px;color:#222;letter-spacing:-0.080px;">admindroid-demo.demo.admindroid.lo...</span>
<span class="t" style="left:839px;top:606.40px;font-size:10.4px;line-height:15px;color:#222;letter-spacing:-0.250px;">Succeeded</span>
<div class="b" style="left:25px;top:656.3000000000001px;width:1001px;height:1px;background:#ececec;"></div>
<span class="t" style="left:33.3px;top:635.60px;font-size:10.4px;line-height:15px;color:#222;letter-spacing:0.064px;">9/25/2025 6:20:14 AM</span>
<span class="t" style="left:229px;top:635.60px;font-size:10.4px;line-height:15px;color:#222;letter-spacing:-0.103px;">DEMO\droid-admin-demo-bot</span>
<div class="b" style="left:424.8px;top:634.0px;width:49px;height:18.8px;border:1px solid #cfe8d0;border-radius:3px;background:#eaf6ea;"></div>
<span class="t" style="left:431.9px;top:637.00px;font-size:9.5px;line-height:13px;color:#1f8f28;letter-spacing:-0.007px;-webkit-text-stroke:0.3px #1f8f28;">Network</span>
<span class="t" style="left:620px;top:635.60px;font-size:10.4px;line-height:15px;color:#222;letter-spacing:-0.080px;">admindroid-demo.demo.admindroid.lo...</span>
<span class="t" style="left:839px;top:635.60px;font-size:10.4px;line-height:15px;color:#222;letter-spacing:-0.250px;">Succeeded</span>
<div class="b" style="left:25px;top:685.5px;width:1001px;height:1px;background:#ececec;"></div>
<span class="t" style="left:33.3px;top:664.80px;font-size:10.4px;line-height:15px;color:#222;letter-spacing:0.064px;">9/25/2025 6:20:14 AM</span>
<span class="t" style="left:229px;top:664.80px;font-size:10.4px;line-height:15px;color:#222;letter-spacing:-0.103px;">DEMO\droid-admin-demo-bot</span>
<div class="b" style="left:424.8px;top:663.1999999999999px;width:49px;height:18.8px;border:1px solid #cfe8d0;border-radius:3px;background:#eaf6ea;"></div>
<span class="t" style="left:431.9px;top:666.20px;font-size:9.5px;line-height:13px;color:#1f8f28;letter-spacing:-0.007px;-webkit-text-stroke:0.3px #1f8f28;">Network</span>
<span class="t" style="left:620px;top:664.80px;font-size:10.4px;line-height:15px;color:#222;letter-spacing:-0.080px;">admindroid-demo.demo.admindroid.lo...</span>
<span class="t" style="left:839px;top:664.80px;font-size:10.4px;line-height:15px;color:#222;letter-spacing:-0.250px;">Succeeded</span>
<div class="b" style="left:1001.6px;top:478px;width:38px;height:30.3px;background:#fff;border-radius:15.2px 2px 3px 15.2px;box-shadow:1px 1px 3px rgba(0,0,0,.2);"></div>
<svg style="left:1013px;top:484px;" width="20" height="19" viewBox="0 0 20 19"><path d="M0.7 0.9 H19.2 V9.5 M0.7 0.9 V15.2 H9.6 M0.7 4.4 H19.2 M6.8 4.4 V15.2 M12.6 4.4 V8" fill="none" stroke="#747474" stroke-width="1.05"/><path d="M0.7 1.4 H19.2" stroke="#747474" stroke-width="1.3"/><g transform="translate(15.2 14.2)"><circle r="2.3" fill="#fff" stroke="#747474" stroke-width="1.05"/><path d="M0 -4.3 V-2.7 M0 2.7 V4.3 M-4.3 0 H-2.7 M2.7 0 H4.3 M-3.05 -3.05 L-1.95 -1.95 M1.95 1.95 L3.05 3.05 M-3.05 3.05 L-1.95 1.95 M1.95 -1.95 L3.05 -3.05" stroke="#747474" stroke-width="1.1"/></g></svg>
<div class="b" style="left:1037.8px;top:475.7px;width:6.2px;height:6.2px;background:#1976d2;border-radius:50%;"></div>
<div class="b" style="left:604px;top:696px;width:108.3px;height:21.6px;background:#fff;border-radius:10.8px;"></div>
<span class="t" style="left:611.8px;top:700.90px;font-size:7.6px;line-height:11px;color:#666;letter-spacing:0.096px;">Go to Page :</span>
<div class="b" style="left:674.7px;top:698.5px;width:13.3px;height:13.8px;background:#efefef;"></div>
<div class="b" style="left:658.8px;top:712.3px;width:31px;height:1px;background:#dcdcdc;"></div>
<span class="t" style="left:665.2px;top:698.90px;font-size:9.3px;line-height:13px;color:#555;">1</span>
<svg style="left:678.8px;top:700.2px;" width="5.6" height="9.4" viewBox="0 0 5.6 9.4"><path d="M0.4 3 L2.8 0.6 L5.2 3 M0.4 6.4 L2.8 8.8 L5.2 6.4" fill="none" stroke="#666" stroke-width="0.9"/></svg>
<div class="b" style="left:695.6px;top:699.2px;width:14px;height:14px;background:#f0f0f0;border-radius:50%;"></div>
<svg style="left:699px;top:703.4px;" width="7.4" height="6" viewBox="0 0 7.4 6"><path d="M7 0.4 V3.2 H1 M2.8 1.2 L0.8 3.2 L2.8 5.2" fill="none" stroke="#999" stroke-width="0.8"/></svg>
<div class="b" style="left:720px;top:696px;width:82px;height:21.6px;background:#fff;border-radius:10.8px;"></div>
<span class="t" style="left:728.2px;top:700.90px;font-size:7.6px;line-height:11px;color:#666;letter-spacing:-0.114px;">Page Size :</span>
<span class="t" style="left:771.4px;top:699.80px;font-size:9px;line-height:13px;color:#444;letter-spacing:-0.116px;">20</span>
<svg style="left:787.7px;top:704.4px;" width="5.6" height="3" viewBox="0 0 5.6 3"><path d="M0 0 H5.6 L2.8 3 Z" fill="#777"/></svg>
<span class="t" style="left:808.7px;top:701.60px;font-size:10px;line-height:14px;color:#444;letter-spacing:0.023px;">Showing</span>
<span class="t" style="left:850.4px;top:701.60px;font-size:10px;line-height:14px;color:#222;letter-spacing:-0.156px;-webkit-text-stroke:0.25px #222;">1 - 20</span>
<span class="t" style="left:878.6px;top:701.60px;font-size:10px;line-height:14px;color:#444;">of</span>
<span class="t" style="left:891.8px;top:695.90px;font-size:15.3px;line-height:21px;color:#333;letter-spacing:0.273px;">17115</span>
<span class="t" style="left:938.4px;top:700.20px;font-size:11.4px;line-height:16px;color:#444;letter-spacing:0.065px;">Logons</span>
<div class="b" style="left:982px;top:696px;width:35.6px;height:20px;background:#fff;border-radius:10px;"></div>
<svg style="left:989.6px;top:702.7px;" width="4" height="7" viewBox="0 0 4 7"><path d="M4 0 V7 L0 3.5 Z" fill="#cfcfcf"/></svg>
<svg style="left:1005.8px;top:702.5px;" width="4.4" height="7.4" viewBox="0 0 4.4 7.4"><path d="M0 0 V7.4 L4.4 3.7 Z" fill="#333"/></svg>
</body></html>
